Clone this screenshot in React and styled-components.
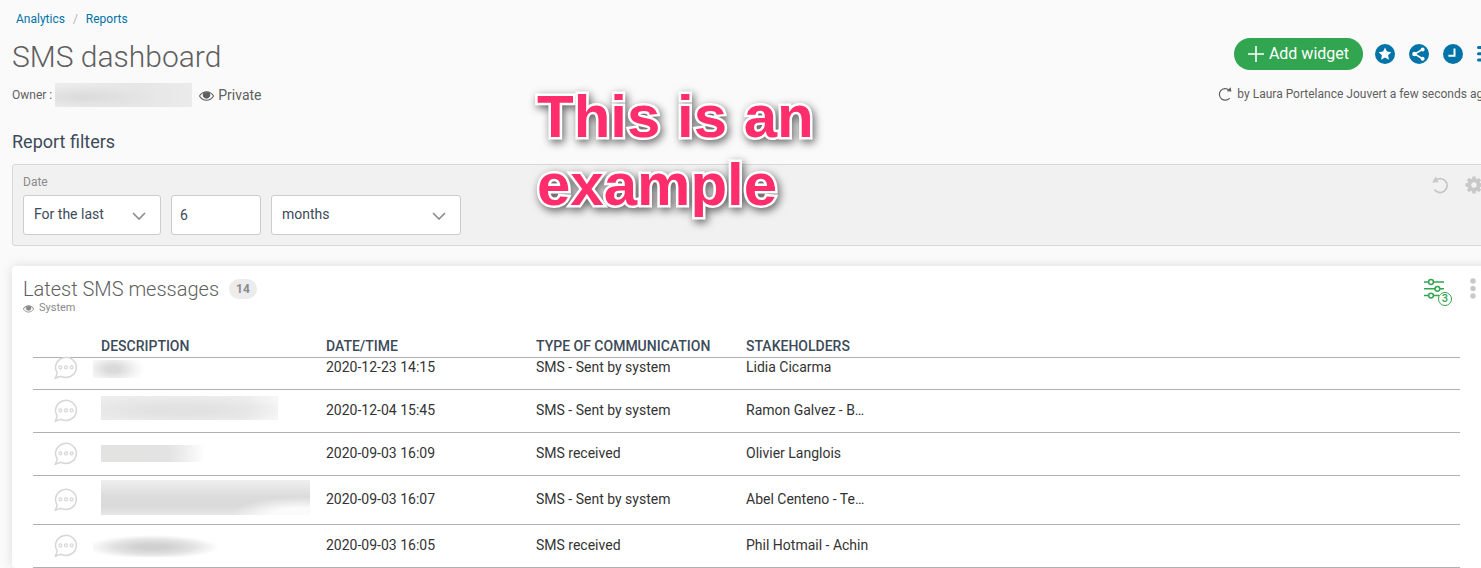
import React, { useState } from 'react';
import styled, { createGlobalStyle } from 'styled-components';

const GlobalStyle = createGlobalStyle`
  * {
    box-sizing: border-box;
  }
  body {
    margin: 0;
    background: #fafafa;
    color: #5f5f5f;
    font-family: Roboto, "Liberation Sans", sans-serif;
    font-size: 14px;
    overflow: hidden;
  }
`;

const messages = [
  {
    date: '2020-12-23 14:15',
    type: 'SMS - Sent by system',
    who: 'Lidia Cicarma',
    height: 32,
    cut: true,
    hidden: { width: 66, height: 18, shift: 8, lift: -4, fade: 'radial-gradient(ellipse 32px 16px at 20px 9px, #dadada 20%, #f4f4f4 70%, transparent 100%)' },
  },
  {
    date: '2020-12-04 15:45',
    type: 'SMS - Sent by system',
    who: 'Ramon Galvez - B…',
    height: 43,
    hidden: { width: 177, height: 24, lift: 4, fade: 'radial-gradient(ellipse 110px 14px at 80px 14px, #e2e2e2 30%, transparent 100%), linear-gradient(90deg, #ececec 80%, #f6f6f6)' },
  },
  {
    date: '2020-09-03 16:09',
    type: 'SMS received',
    who: 'Olivier Langlois',
    height: 43,
    hidden: { width: 104, height: 17, lift: 0, fade: 'linear-gradient(90deg, #e3e3e2, #e3e3e3 65%, #ececec 78%, #ffffff)' },
  },
  {
    date: '2020-09-03 16:07',
    type: 'SMS - Sent by system',
    who: 'Abel Centeno - Te…',
    height: 49,
    hidden: { width: 209, height: 35, lift: 4, fade: 'radial-gradient(ellipse 70px 18px at 200px 35px, #fbfbfb 40%, transparent 100%), linear-gradient(180deg, #efefef, #dcdcdc 45%, #dadada 75%, #e6e6e6)' },
  },
  {
    date: '2020-09-03 16:05',
    type: 'SMS received',
    who: 'Phil Hotmail - Achin',
    height: 43,
    hidden: { width: 124, height: 24, shift: 8, lift: 0, fade: 'radial-gradient(ellipse 66px 12px at 60px 14px, #d0d0d1 20%, #e2e2e2 60%, transparent 100%)' },
  },
];

const Eye = ({ size }) => (
  <svg width={size} height={size} viewBox="0 0 1792 1792" fill="currentColor" aria-hidden="true">
    <path d="M1664 960q-152-236-381-353 61 104 61 225 0 185-131.5 316.5t-316.5 131.5-316.5-131.5-131.5-316.5q0-121 61-225-229 117-381 353 133 205 333.5 326.5t434.5 121.5 434.5-121.5 333.5-326.5zm-720-384q0-20-14-34t-34-14q-125 0-214.5 89.5t-89.5 214.5q0 20 14 34t34 14 34-14 14-34q0-86 61-147t147-61q20 0 34-14t14-34zm848 384q0 34-20 69-140 230-376.5 368.5t-499.5 138.5-499.5-139-376.5-368q-20-35-20-69t20-69q140-229 376.5-368t499.5-139 499.5 139 376.5 368q20 35 20 69z" />
    <circle cx="896" cy="832" r="330" />
  </svg>
);

const Cog = () => (
  <svg width="20" height="20" viewBox="0 0 1792 1792" fill="currentColor" aria-hidden="true">
    <path d="M1152 896q0-106-75-181t-181-75-181 75-75 181 75 181 181 75 181-75 75-181zm512-109v222q0 12-8 23t-20 13l-185 28q-19 54-39 91 35 50 107 138 10 12 10 25t-9 23q-27 37-99 108t-94 71q-12 0-26-9l-138-108q-44 23-91 38-16 136-29 186-7 28-36 28h-222q-14 0-24.5-8.5t-11.5-21.5l-28-184q-49-16-90-37l-141 107q-10 9-25 9-14 0-25-11-126-114-165-168-7-10-7-23 0-12 8-23 15-21 51-66.5t54-70.5q-27-50-41-99l-183-27q-13-2-21-12.5t-8-23.5v-222q0-12 8-23t19-13l186-28q14-46 39-92-40-57-107-138-10-12-10-24 0-10 9-23 26-36 98.5-107.5t94.5-71.5q13 0 26 10l138 107q44-23 91-38 16-136 29-186 7-28 36-28h222q14 0 24.5 8.5t11.5 21.5l28 184q49 16 90 37l142-107q9-9 24-9 13 0 25 10 129 119 165 170 7 8 7 22 0 12-8 23-15 21-51 66.5t-54 70.5q26 50 41 98l183 28q13 2 21 12.5t8 23.5z" />
  </svg>
);

const Undo = () => (
  <svg width="18" height="18" viewBox="0 0 18 18" fill="none" stroke="currentColor" strokeWidth="1.8" aria-hidden="true">
    <path d="M4.2 4.6A7 7 0 1 1 3.4 13.6" />
    <path d="M4.8.4L1 6.4l6.6-.2z" fill="currentColor" stroke="none" />
  </svg>
);

const Reload = () => (
  <svg width="14" height="14" viewBox="0 0 14 14" fill="none" stroke="currentColor" strokeWidth="1.2" aria-hidden="true">
    <path d="M11 3A5.8 5.8 0 1 0 11.8 11" />
    <path d="M12.6.2l.8 4.4-4.8-.4z" fill="currentColor" stroke="none" />
  </svg>
);

const Chevron = () => (
  <svg width="14" height="8" viewBox="0 0 14 8" fill="none" stroke="#8a8a8a" strokeWidth="1.6" aria-hidden="true">
    <path d="M1 1l6 6 6-6" />
  </svg>
);

const Bubble = () => (
  <svg width="24" height="24" viewBox="0 0 24 24" fill="none" stroke="#d6d6d6" strokeWidth="1.5" aria-hidden="true">
    <path d="M3.2 16.8A10.4 10 0 1 1 7.2 20.3Q4.6 20.6 1.2 22.4Q2.6 19.6 3.2 16.8z" strokeLinejoin="round" />
    <circle cx="6.4" cy="11.4" r="1.5" strokeWidth="1.2" />
    <circle cx="12" cy="11.4" r="1.5" strokeWidth="1.2" />
    <circle cx="17.6" cy="11.4" r="1.5" strokeWidth="1.2" />
  </svg>
);

const Sliders = () => (
  <svg width="20" height="22" viewBox="0 0 20 22" fill="none" stroke="currentColor" strokeWidth="1.5" aria-hidden="true">
    <path d="M0 4h4.5M9.5 4H20M0 10.8h11M16 10.8h4M0 17.6h4.5M9.5 17.6H15" />
    <circle cx="7" cy="4" r="2.4" />
    <circle cx="13.4" cy="10.8" r="2.4" />
    <circle cx="7" cy="17.6" r="2.4" />
  </svg>
);

const Dots = () => (
  <svg width="6" height="22" viewBox="0 0 6 22" fill="currentColor" aria-hidden="true">
    <circle cx="3" cy="3" r="2.7" />
    <circle cx="3" cy="10.5" r="2.7" />
    <circle cx="3" cy="18" r="2.7" />
  </svg>
);

const Plus = () => (
  <svg width="16" height="16" viewBox="0 0 16 16" stroke="#fff" strokeWidth="1.6" aria-hidden="true">
    <path d="M8 0v16M0 8h16" />
  </svg>
);

const Favorite = () => (
  <svg width="20" height="20" viewBox="0 0 20 20" aria-hidden="true">
    <circle cx="10" cy="10" r="10" fill="#0073a8" />
    <path d="M10 3.6l1.9 4 4.4.6-3.2 3.1.8 4.4L10 13.6l-3.9 2.1.8-4.4-3.2-3.1 4.4-.6z" fill="#fff" />
  </svg>
);

const Share = () => (
  <svg width="20" height="20" viewBox="0 0 20 20" aria-hidden="true">
    <circle cx="10" cy="10" r="10" fill="#0073a8" />
    <path d="M13.6 5.4L5.6 10l8 4.8" stroke="#fff" strokeWidth="1.6" fill="none" />
    <g fill="#fff">
      <circle cx="13.6" cy="5.4" r="2" />
      <circle cx="5.4" cy="10" r="2.2" />
      <circle cx="13.6" cy="14.8" r="2" />
    </g>
  </svg>
);

const Clock = () => (
  <svg width="20" height="20" viewBox="0 0 20 20" aria-hidden="true">
    <circle cx="10" cy="10" r="10" fill="#0073a8" />
    <path d="M11.5 4.5v7.3H5.4" stroke="#fff" strokeWidth="2" fill="none" />
  </svg>
);

const List = () => (
  <svg width="20" height="20" viewBox="0 0 20 20" stroke="#0073a8" strokeWidth="3" strokeLinecap="round" aria-hidden="true">
    <path d="M1.5 3.6h17M1.5 9.8h17M1.5 16h17" />
  </svg>
);

const App = () => {
  const [range, setRange] = useState('For the last');
  const [amount, setAmount] = useState('6');
  const [unit, setUnit] = useState('months');

  return (
    <>
      <GlobalStyle />
      <Page>
        <Breadcrumb aria-label="Breadcrumb">
          <a href="#analytics">Analytics</a>
          <span>/</span>
          <a href="#reports">Reports</a>
        </Breadcrumb>

        <Header>
          <div>
            <Title>SMS dashboard</Title>
            <Owner>
              <span>Owner :</span>
              <OwnerName />
              <Eye size={15} />
              <Visibility>Private</Visibility>
            </Owner>
          </div>
          <div>
            <Actions>
              <AddButton type="button"><Plus />Add widget</AddButton>
              <IconButton type="button" aria-label="Favorite"><Favorite /></IconButton>
              <IconButton type="button" aria-label="Share"><Share /></IconButton>
              <IconButton type="button" aria-label="Schedule"><Clock /></IconButton>
              <IconButton type="button" aria-label="Menu"><List /></IconButton>
            </Actions>
            <Updated><Reload />by Laura Portelance Jouvert a few seconds ago</Updated>
          </div>
        </Header>

        <FiltersTitle>Report filters</FiltersTitle>
        <Filters>
          <div>
            <FilterLabel htmlFor="range">Date</FilterLabel>
            <Fields>
              <SelectBox $width={138}>
                <select id="range" value={range} onChange={(e) => setRange(e.target.value)}>
                  <option>For the last</option>
                  <option>For the next</option>
                </select>
                <Chevron />
              </SelectBox>
              <AmountInput aria-label="Amount" value={amount} onChange={(e) => setAmount(e.target.value)} />
              <SelectBox $width={190}>
                <select aria-label="Unit" value={unit} onChange={(e) => setUnit(e.target.value)}>
                  <option>days</option>
                  <option>months</option>
                  <option>years</option>
                </select>
                <Chevron />
              </SelectBox>
            </Fields>
          </div>
          <FilterTools>
            <IconButton type="button" aria-label="Reset"><Undo /></IconButton>
            <IconButton type="button" aria-label="Settings"><Cog /></IconButton>
          </FilterTools>
        </Filters>

        <Widget>
          <WidgetHeader>
            <div>
              <WidgetTitle>Latest SMS messages<Count>14</Count></WidgetTitle>
              <System><Eye size={11} />System</System>
            </div>
            <WidgetTools>
              <FilterButton type="button" aria-label="Widget filters">
                <Sliders />
                <FilterCount>3</FilterCount>
              </FilterButton>
              <IconButton type="button" aria-label="More"><Dots /></IconButton>
            </WidgetTools>
          </WidgetHeader>

          <Table>
            <colgroup>
              <Col $width={68} />
              <Col $width={225} />
              <Col $width={210} />
              <Col $width={210} />
              <col />
            </colgroup>
            <thead>
              <tr>
                <th aria-label="Kind" />
                <th>Description</th>
                <th>Date/Time</th>
                <th>Type of communication</th>
                <th>Stakeholders</th>
              </tr>
            </thead>
            <tbody>
              {messages.map((m) => (
                <Row key={m.date} $height={m.height}>
                  <IconCell $cut={m.cut}><Bubble /></IconCell>
                  <TextCell $cut={m.cut}><Redacted $box={m.hidden} /></TextCell>
                  <TextCell $cut={m.cut}>{m.date}</TextCell>
                  <TextCell $cut={m.cut}>{m.type}</TextCell>
                  <TextCell $cut={m.cut}>{m.who}</TextCell>
                </Row>
              ))}
            </tbody>
          </Table>
        </Widget>
      </Page>
      <Callout>This is an<br />example</Callout>
    </>
  );
};

const Page = styled.div`
  margin-right: -16px;
  padding: 12px 0 0 12px;
`;

const Breadcrumb = styled.nav`
  display: flex;
  gap: 8px;
  padding-left: 4px;
  font-size: 12px;
  line-height: 14px;
  color: #b5b5b5;

  a {
    color: #0073a8;
    text-decoration: none;
  }
`;

const Header = styled.header`
  display: flex;
  justify-content: space-between;
  margin-top: 12px;
`;

const Title = styled.h1`
  margin: 0;
  font-size: 30px;
  font-weight: 300;
  line-height: 38px;
`;

const Owner = styled.div`
  display: flex;
  align-items: center;
  height: 24px;
  margin-top: 7px;
  font-size: 12px;
`;

const OwnerName = styled.span`
  width: 137px;
  height: 24px;
  margin: 0 7px 0 3px;
  background: radial-gradient(ellipse 70px 12px at 30px 14px, #dcdcdc 10%, transparent 100%), linear-gradient(90deg, #ececec, #e6e6e6 60%, #ebebeb);
`;

const Visibility = styled.span`
  margin-left: 4px;
  font-size: 14px;
`;

const Actions = styled.div`
  display: flex;
  align-items: center;
  justify-content: flex-end;
  gap: 14px;
`;

const AddButton = styled.button`
  display: flex;
  align-items: center;
  gap: 5px;
  height: 32px;
  margin-right: -2px;
  padding: 0 14px 1px;
  border: 0;
  border-radius: 16px;
  background: #31a54f;
  color: #fff;
  font-family: inherit;
  font-size: 16px;
`;

const IconButton = styled.button`
  display: flex;
  padding: 0;
  border: 0;
  background: none;
  color: inherit;
`;

const Updated = styled.div`
  display: flex;
  align-items: center;
  justify-content: flex-end;
  gap: 5px;
  margin-top: 16px;
  padding-right: 7px;
  font-size: 12px;
  line-height: 16px;
`;

const FiltersTitle = styled.h2`
  margin: 24px 0 11px;
  color: #3c4a59;
  font-size: 18px;
  font-weight: 400;
  line-height: 22px;
`;

const Filters = styled.section`
  display: flex;
  justify-content: space-between;
  padding: 10px;
  border: 1px solid #d8d8d8;
  border-radius: 3px;
  background: #f1f1f1;
`;

const FilterLabel = styled.label`
  display: block;
  margin-bottom: 6px;
  color: #8a8a8a;
  font-size: 12px;
  line-height: 14px;
`;

const Fields = styled.div`
  display: flex;
  gap: 10px;
`;

const SelectBox = styled.div`
  position: relative;
  width: ${(props) => props.$width}px;

  select {
    width: 100%;
    height: 40px;
    padding: 0 10px 2px;
    border: 1px solid #ccc;
    border-radius: 3px;
    background: #fff;
    color: #3c4a59;
    font-family: inherit;
    font-size: 14px;
    appearance: none;
  }

  svg {
    position: absolute;
    top: 17px;
    right: 15px;
    pointer-events: none;
  }
`;

const AmountInput = styled.input`
  width: 90px;
  height: 40px;
  padding: 0 8px;
  border: 1px solid #ccc;
  border-radius: 3px;
  background: #fff;
  color: #3c4a59;
  font-family: inherit;
  font-size: 14px;
`;

const FilterTools = styled.div`
  display: flex;
  align-items: center;
  gap: 15px;
  height: 20px;
  padding-right: 2px;
  color: #c8c8c8;
`;

const Widget = styled.section`
  margin-top: 20px;
  padding: 10px 37px 0 21px;
  border-radius: 4px;
  background: #fff;
  box-shadow: 0 0 12px rgba(0, 0, 0, 0.12);
`;

const WidgetHeader = styled.div`
  display: flex;
  justify-content: space-between;
  margin: 0 -16px 0 -10px;
`;

const WidgetTitle = styled.h2`
  display: flex;
  align-items: center;
  margin: 0;
  font-size: 20px;
  font-weight: 300;
  line-height: 26px;
`;

const Count = styled.span`
  margin-left: 10px;
  padding: 0 7px;
  border-radius: 10px;
  background: #ececec;
  color: #8a8a8a;
  font-size: 12px;
  font-weight: 700;
  line-height: 20px;
`;

const System = styled.div`
  display: flex;
  align-items: center;
  gap: 5px;
  color: #8a8a8a;
  font-size: 11px;
  line-height: 12px;
`;

const WidgetTools = styled.div`
  display: flex;
  align-items: flex-start;
  gap: 17px;
  padding-top: 2px;
  color: #c8c8c8;
`;

const FilterButton = styled(IconButton)`
  position: relative;
  padding-right: 9px;
  color: #31a54f;
`;

const FilterCount = styled.span`
  position: absolute;
  right: 1px;
  bottom: -6px;
  width: 14px;
  height: 14px;
  border: 1px solid #31a54f;
  border-radius: 50%;
  background: #fff;
  font-family: Roboto, "Liberation Sans", sans-serif;
  font-size: 11px;
  font-weight: 500;
  line-height: 12px;
  text-align: center;
`;

const Table = styled.table`
  width: 100%;
  margin-top: 20px;
  border-collapse: separate;
  border-spacing: 0;
  table-layout: fixed;
  color: #333;
  font-size: 14px;
  line-height: 16px;

  th,
  td {
    padding: 0;
    border-bottom: 1px solid #b0b0b0;
    text-align: left;
  }

  th {
    height: 24px;
    color: #3c4a59;
    font-weight: 500;
    text-transform: uppercase;
    white-space: nowrap;
  }
`;

const Col = styled.col`
  width: ${(props) => props.$width}px;
`;

const Row = styled.tr`
  height: ${(props) => props.$height}px;
`;

// the first row is scrolled partly under the table head
const TextCell = styled.td`
  && {
    padding-bottom: ${(props) => (props.$cut ? 13 : 2)}px;
  }
`;

const IconCell = styled.td`
  svg {
    display: block;
    margin: ${(props) => (props.$cut ? '-2px 0 9px 21px' : '0 0 0 21px')};
  }
`;

const Redacted = styled.div`
  width: ${(props) => props.$box.width}px;
  height: ${(props) => props.$box.height}px;
  margin-bottom: ${(props) => props.$box.lift}px;
  margin-left: -${(props) => props.$box.shift || 0}px;
  background: ${(props) => props.$box.fade};
`;

const Callout = styled.div`
  position: absolute;
  top: 83px;
  left: 537px;
  color: #ff2d6b;
  font-family: "Liberation Sans", Arial, sans-serif;
  font-size: 60px;
  font-weight: 700;
  line-height: 68px;
  white-space: nowrap;
  -webkit-text-stroke: 5px #fff;
  paint-order: stroke fill;
  filter: drop-shadow(2px 3px 4px rgba(0, 0, 0, 0.6));
`;

export default App;
